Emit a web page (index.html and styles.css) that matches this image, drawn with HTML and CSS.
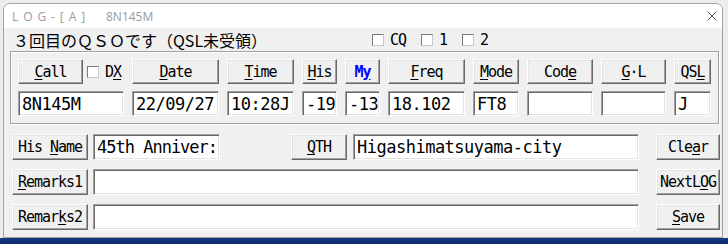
FILE: index.html
```html
<!DOCTYPE html>
<html lang="ja">
<head>
<meta charset="UTF-8">
<title>LOG-[A]</title>
<link rel="stylesheet" href="styles.css">
</head>
<body>
<div class="log-win">
  <!-- タイトルバー -->
  <div class="titlebar">
    <span class="title">L O G - [ A ]</span>
    <span class="title-call">8N145M</span>
    <svg class="close" width="10" height="10" viewBox="0 0 10 10">
      <path d="M0.5 0.5 L9.5 9.5 M9.5 0.5 L0.5 9.5" stroke="#5c5c5c" stroke-width="1" fill="none"/>
    </svg>
  </div>

  <div class="log-body">
    <!-- 状態表示 -->
    <div class="status">
      <span class="msg">３回目のＱＳＯです（QSL未受領）</span>
      <label class="chk"><span class="box"></span><span>CQ</span></label>
      <label class="chk"><span class="box"></span><span>1</span></label>
      <label class="chk"><span class="box"></span><span>2</span></label>
    </div>

    <!-- QSOデータ -->
    <div class="frame">
      <div class="qso-grid">
        <div class="call-cell">
          <button class="btn call-btn"><span><u>C</u>all</span></button>
          <label class="chk dx"><span class="box"></span><span>D<u>X</u></span></label>
        </div>
        <button class="btn"><span><u>D</u>ate</span></button>
        <button class="btn"><span><u>T</u>ime</span></button>
        <button class="btn"><span><u>H</u>is</span></button>
        <button class="btn my"><span>M<u>y</u></span></button>
        <button class="btn"><span><u>F</u>req</span></button>
        <button class="btn"><span><u>M</u>ode</span></button>
        <button class="btn"><span>Cod<u>e</u></span></button>
        <button class="btn"><span><u>G</u>·L</span></button>
        <button class="btn"><span>QS<u>L</u></span></button>

        <div class="field">8N145M</div>
        <div class="field">22/09/27</div>
        <div class="field">10:28J</div>
        <div class="field">-19</div>
        <div class="field">-13</div>
        <div class="field">18.102</div>
        <div class="field">FT8</div>
        <div class="field"></div>
        <div class="field"></div>
        <div class="field">J</div>
      </div>
    </div>

    <!-- 名前・QTH・備考 -->
    <div class="rows">
      <div class="row">
        <button class="btn side"><span>His <u>N</u>ame</span></button>
        <div class="field name">45th Anniver:</div>
        <button class="btn qth"><span><u>Q</u>TH</span></button>
        <div class="field qth-field">Higashimatsuyama-city</div>
        <button class="btn act"><span>Cle<u>a</u>r</span></button>
      </div>
      <div class="row">
        <button class="btn side"><span><u>R</u>emarks1</span></button>
        <div class="field wide"></div>
        <button class="btn act"><span>NextL<u>O</u>G</span></button>
      </div>
      <div class="row">
        <button class="btn side"><span>Remar<u>k</u>s2</span></button>
        <div class="field wide"></div>
        <button class="btn act"><span><u>S</u>ave</span></button>
      </div>
    </div>
  </div>
</div>
</body>
</html>
```

FILE: styles.css
```css
html, body {
  margin: 0;
  padding: 0;
}
body {
  width: 728px;
  height: 244px;
  overflow: hidden;
  background: linear-gradient(180deg, #ececec 0, #ececec 238px, #163a86 238px, #0c2a6e 244px);
  font-family: "DejaVu Sans Mono", monospace;
}
.log-win {
  margin: 3px 0 0 3px;
  width: 718px;
  height: 233px;
  border: 1px solid #a3a3a3;
  border-radius: 7px 7px 0 0;
  background: #f0f0f0;
  overflow: hidden;
}
.titlebar {
  height: 24px;
  background: #fff;
  display: flex;
  align-items: center;
  padding-left: 8px;
  font-family: "Open Sans", "Liberation Sans", sans-serif;
  font-size: 12px;
  color: #9a9a9a;
}
.title {
  width: 94px;
  letter-spacing: 0.9px;
  white-space: pre;
}
.close {
  margin-left: auto;
  margin-right: 5px;
}
.status {
  height: 23px;
  display: flex;
  align-items: center;
  padding-left: 9px;
}
.msg {
  width: 359px;
  font-family: "Noto Sans CJK JP", sans-serif;
  font-size: 16px;
  line-height: 1;
  color: #000;
  white-space: nowrap;
}
.chk {
  display: flex;
  align-items: center;
  gap: 6px;
  margin-right: 15px;
  font-size: 15px;
  letter-spacing: -1px;
  color: #000;
}
.box {
  width: 10px;
  height: 10px;
  background: #fff;
  border: 1px solid;
  border-color: #7a7a7a #c8c8c8 #c8c8c8 #7a7a7a;
}
.frame {
  margin-left: 6px;
  width: 700px;
  height: 57px;
  padding: 7px 0 7px 7px;
  border: 1px solid #a0a0a0;
  box-shadow: inset 1px 1px #fff, 1px 1px #fff;
}
.qso-grid {
  display: grid;
  grid-template-columns: 106px 87px 67px 35px 35px 77px 46px 66px 65px 37px;
  grid-template-rows: 25px 25px;
  column-gap: 8px;
  row-gap: 7px;
}
.call-cell {
  display: flex;
  align-items: center;
}
.call-btn {
  width: 65px;
  height: 25px;
}
.dx {
  margin-left: 4px;
  margin-right: 0;
  gap: 6px;
}
.btn {
  margin: 0;
  padding: 0;
  box-sizing: border-box;
  background: #f0f0f0;
  border: 1px solid;
  border-color: #fff #696969 #696969 #fff;
  box-shadow: inset -1px -1px #a0a0a0, inset 1px 1px #e3e3e3;
  font-family: "DejaVu Sans Mono", monospace;
  font-size: 15px;
  letter-spacing: -1px;
  color: #000;
  display: flex;
  align-items: center;
  justify-content: center;
  white-space: nowrap;
}
.btn u, .chk u {
  text-underline-offset: 2px;
}
.my {
  color: #0000ff;
  font-weight: bold;
}
.field {
  box-sizing: border-box;
  background: #fff;
  border: 1px solid;
  border-color: #a0a0a0 #fff #fff #a0a0a0;
  box-shadow: inset 1px 1px #696969, inset -1px -1px #e3e3e3;
  font-family: "DejaVu Sans Mono", monospace;
  font-size: 17px;
  letter-spacing: -0.5px;
  padding-left: 3px;
  display: flex;
  align-items: center;
  white-space: nowrap;
  overflow: hidden;
  color: #000;
}
.rows {
  margin-top: 10px;
  padding-left: 8px;
  display: flex;
  flex-direction: column;
  gap: 9px;
}
.row {
  display: flex;
  height: 26px;
}
.side {
  width: 76px;
}
.name {
  width: 127px;
  margin-left: 5px;
  letter-spacing: -1px;
}
.qth {
  width: 56px;
  margin-left: 71px;
}
.qth-field {
  width: 286px;
  margin-left: 6px;
}
.wide {
  width: 546px;
  margin-left: 5px;
}
.act {
  width: 64px;
  margin-left: 17px;
}
```
